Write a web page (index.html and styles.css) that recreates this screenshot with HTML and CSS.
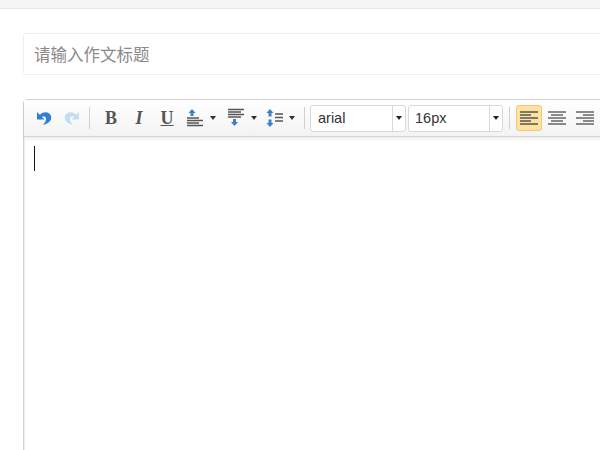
FILE: index.html

```html
<!DOCTYPE html>
<html lang="en">
<head>
  <meta charset="UTF-8" />
  <meta name="viewport" content="width=device-width, initial-scale=1.0"/>
  <title>Essay editor</title>
  <link rel="stylesheet" href="styles.css">
</head>
<body>
  <div class="topbar"></div>
  <div class="content">
    <div class="title-input">请输入作文标题</div>
    <div class="editor">
      <div class="toolbar">
        <button class="tool tool-first">
          <svg width="16" height="16" viewBox="0 0 16 16"><path d="M1 2v7.500h7.500L5.800 6.800C7.300 5.800 9.500 6.300 10 8.300 10.400 10.300 9 12.500 7 15 12 14 15.700 11 15.200 6.800 14.500 2 8 .5 3.800 4.800Z" fill="#2f7fd6"/></svg>
        </button>
        <button class="tool">
          <svg width="16" height="16" viewBox="0 0 16 16"><path d="M15 2v7.500H7.500L10.200 6.800C8.700 5.800 6.500 6.300 6 8.300 5.600 10.300 7 12.500 9 15 4 14 .3 11 .8 6.800 1.500 2 8 .5 12.200 4.800Z" fill="#c5ddf3"/></svg>
        </button>
        <span class="sep"></span>
        <button class="tool letter letter-b">B</button>
        <button class="tool letter letter-i">I</button>
        <button class="tool letter letter-u">U</button>
        <button class="tool combo combo-first">
          <svg width="18" height="20" viewBox="0 0 18 20"><path d="M6 1l3.500 4H7.500v3h-3V5H2.500Z" fill="#3a7fd0"/><path d="M1 10h12M1 12.500h16M1 15h12M1 17.500h16" stroke="#555" stroke-width="1.500"/></svg>
          <i class="caret"></i>
        </button>
        <button class="tool combo combo-second">
          <svg width="18" height="20" viewBox="0 0 18 20"><path d="M1 1.500h16M1 4h13M1 6.500h16M1 9h13" stroke="#555" stroke-width="1.500"/><path d="M7.500 18l3.500-4H9v-3H6v3H4Z" fill="#3a7fd0"/></svg>
          <i class="caret"></i>
        </button>
        <button class="tool combo">
          <svg width="18" height="20" viewBox="0 0 18 20"><path d="M5 1l3.500 4H6.500v3.500h-3V5H1.500ZM5 19l3.500-4H6.500v-3.500h-3V15H1.500Z" fill="#3a7fd0"/><path d="M10 6h8M10 9.500h8M10 13h8" stroke="#555" stroke-width="1.500"/></svg>
          <i class="caret"></i>
        </button>
        <span class="sep sep-mid"></span>
        <div class="select select-font"><span class="select-text">arial</span><span class="select-arrow"><i class="caret caret-dark"></i></span></div>
        <div class="select select-size"><span class="select-text">16px</span><span class="select-arrow"><i class="caret caret-dark"></i></span></div>
        <span class="sep sep-align"></span>
        <button class="tool align active">
          <svg width="18" height="15" viewBox="0 0 18 15"><path d="M0 1h18M0 4h11M0 7h18M0 10h11M0 13h18" stroke="#555" stroke-width="1.500"/></svg>
        </button>
        <button class="tool align">
          <svg width="18" height="15" viewBox="0 0 18 15"><path d="M0 1h18M3 4h12M0 7h18M3 10h12M0 13h18" stroke="#666" stroke-width="1.500"/></svg>
        </button>
        <button class="tool align">
          <svg width="18" height="15" viewBox="0 0 18 15"><path d="M0 1h18M7 4h11M0 7h18M7 10h11M0 13h18" stroke="#666" stroke-width="1.500"/></svg>
        </button>
      </div>
      <div class="editor-body"><span class="cursor"></span></div>
    </div>
  </div>
</body>
</html>
```

FILE: styles.css

```css
html, body {
  margin: 0;
  height: 100%;
  overflow: hidden;
  background: #fff;
}
body {
  width: 600px;
  font-family: "Liberation Sans", Arial, sans-serif;
}
.topbar {
  height: 8px;
  background: #f5f5f5;
  border-bottom: 1px solid #e6e6e6;
}
.content {
  width: 700px;
  padding: 24px 0 0 23px;
}
.title-input {
  box-sizing: border-box;
  height: 42px;
  padding-left: 10px;
  border: 1px solid #eee;
  border-radius: 3px;
  font-family: "Noto Sans CJK SC", sans-serif;
  font-size: 16.500px;
  line-height: 40px;
  color: #8a8a8a;
}
.editor {
  margin-top: 24px;
  height: 400px;
  border: 1px solid #d4d4d4;
  border-radius: 4px 0 0 0;
  box-shadow: 1px 0 0 #eee inset;
}
.toolbar {
  display: flex;
  align-items: center;
  box-sizing: border-box;
  height: 37px;
  padding-left: 7px;
  background: linear-gradient(to bottom, #fff, #f3f3f3);
  border-bottom: 1px solid #d4d4d4;
  box-shadow: 0 2px 4px rgba(0,0,0,0.08);
}
.tool {
  display: flex;
  align-items: center;
  justify-content: center;
  flex: none;
  box-sizing: border-box;
  width: 26px;
  height: 26px;
  margin: 0 1px;
  padding: 0;
  border: 1px solid transparent;
  border-radius: 3px;
  background: none;
}
.tool-first {
  margin-left: 0;
}
.sep {
  flex: none;
  width: 1px;
  height: 22px;
  margin: 0 7px 0 3px;
  background: #d0d0d0;
}
.sep-mid {
  margin: 0 5px 0 5px;
}
.sep-align {
  margin: 0 6px 0 6px;
}
.letter {
  font-family: "Liberation Serif", "Times New Roman", serif;
  font-size: 18px;
  color: #555;
}
.letter-b {
  font-weight: bold;
}
.letter-i {
  font-style: italic;
  font-weight: bold;
}
.letter-u {
  text-decoration: underline;
  font-weight: bold;
}
.combo {
  width: 37px;
  gap: 6px;
}
.combo-first {
  margin-left: 1px;
  margin-right: 3px;
}
.combo-second {
  margin-right: 0;
}
.caret {
  flex: none;
  width: 0;
  height: 0;
  border-left: 3.500px solid transparent;
  border-right: 3.500px solid transparent;
  border-top: 4px solid #333;
}
.select {
  display: flex;
  flex: none;
  box-sizing: border-box;
  height: 27px;
  margin-right: 2px;
  background: #fff;
  border: 1px solid #d8d8d8;
  border-radius: 3px;
  font-size: 14.500px;
  line-height: 25px;
  color: #333;
}
.select-font {
  width: 96px;
}
.select-size {
  width: 95px;
  margin-right: 0;
}
.select-text {
  flex: 1;
  padding-left: 7px;
}
.select-size .select-text {
  padding-left: 6px;
}
.select-arrow {
  display: flex;
  align-items: center;
  justify-content: center;
  width: 12px;
  border-left: 1px solid #d8d8d8;
}
.caret-dark {
  border-top-color: #222;
}
.align {
  margin: 0 2px 0 0;
}
.active {
  background: #ffe29f;
  border-color: #f0c978;
}
.editor-body {
  padding: 9px 0 0 10px;
}
.cursor {
  display: block;
  width: 1px;
  height: 25px;
  background: #111;
}
```
